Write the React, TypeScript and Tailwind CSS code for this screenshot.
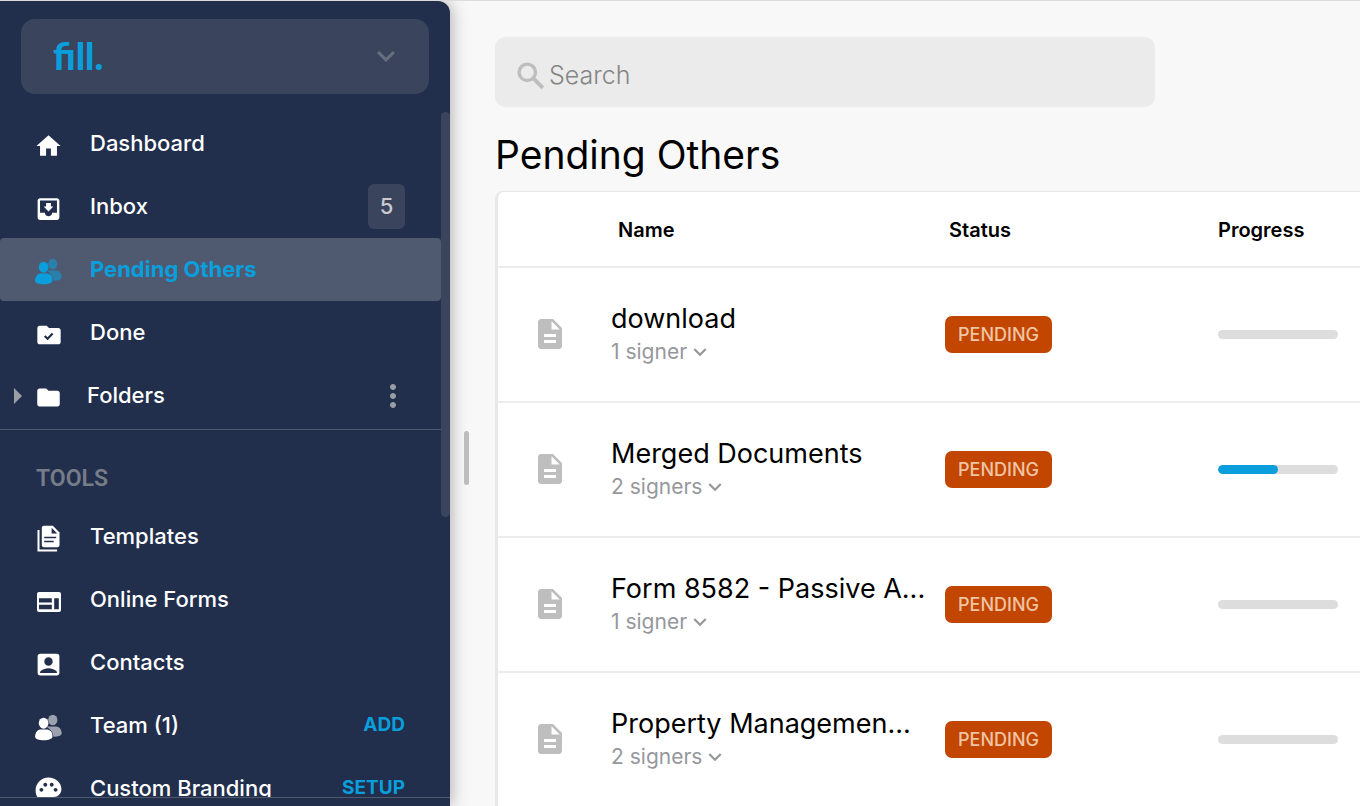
import type { ReactNode } from "react";
import {
  MdAccountBox,
  MdDescription,
  MdExpandMore,
  MdFolder,
  MdHome,
  MdMoreVert,
  MdMoveToInbox,
} from "react-icons/md";

function PeopleIcon() {
  return (
    <svg width="27" height="27" viewBox="0 0 27 27" fill="currentColor" aria-hidden="true">
      <g opacity="0.55">
        <ellipse cx="17.8" cy="6" rx="4.6" ry="5.2" />
        <path d="M11.5 12.6H21c3.4 0 5.7 3.2 5.7 6.6 0 2.4-3.6 3.6-8.2 3.6-.6-4.6-3-7.4-7-10.2Z" />
      </g>
      <ellipse cx="8.6" cy="9.2" rx="4.8" ry="5.5" />
      <path d="M.1 22.8c0-4.6 2.6-7.3 5.9-7.3h5.3c3.5 0 6.2 2.6 6.2 7.1 0 2.6-4.2 3.7-8.7 3.7S.1 25.2.1 22.8Z" />
    </svg>
  );
}

function FolderCheckIcon() {
  return (
    <svg width="28" height="28" viewBox="0 0 24 24" aria-hidden="true">
      <path
        fill="currentColor"
        d="M10 4H4c-1.1 0-1.99.9-1.99 2L2 18c0 1.1.9 2 2 2h16c1.1 0 2-.9 2-2V8c0-1.1-.9-2-2-2h-8l-2-2z"
      />
      <path d="M8.3 12.8l2.500 2.400 4.300-4.400" fill="none" stroke="#212e4c" strokeWidth="1.9" />
    </svg>
  );
}

function TemplatesIcon() {
  return (
    <svg width="25" height="27" viewBox="0 0 25 27" aria-hidden="true">
      <path
        fill="currentColor"
        d="M8 .8h8.900l6.600 6.600V20c0 1.300-.8 2.200-2.200 2.200H8c-1.400 0-2.200-.9-2.200-2.200V3C5.800 1.700 6.600.8 8 .8Z"
      />
      <path d="M15.600 2.800v5.800h5.600Z" fill="#212e4c" />
      <path d="M8.200 12.500h12M8.200 16.500h9.500" stroke="#212e4c" strokeWidth="1.300" />
      <path d="M2.500 5v20.400h18.600" fill="none" stroke="currentColor" strokeWidth="2" />
    </svg>
  );
}

function FormIcon() {
  return (
    <svg width="24" height="20" viewBox="0 0 24 20" aria-hidden="true">
      <rect width="24" height="20" rx="2" fill="currentColor" />
      <path d="M2 6.200h12.800v4.200H2zM2 12.800h12.800v4.400H2zM17.200 6.200h4.600v11h-4.600z" fill="#212e4c" />
    </svg>
  );
}

function PaletteIcon() {
  return (
    <svg width="31" height="31" viewBox="0 0 24 24" fill="currentColor" className="shrink-0" aria-hidden="true">
      <path d="M12 2C6.490 2 2 6.490 2 12s4.490 10 10 10a2.500 2.500 0 0 0 2.500-2.500c0-.61-.23-1.200-.64-1.670a.528.528 0 0 1-.13-.33c0-.28.22-.5.5-.5H16c3.310 0 6-2.690 6-6 0-4.960-4.490-9-10-9zm5.500 11c-.83 0-1.500-.67-1.500-1.500s.67-1.500 1.500-1.500 1.500.67 1.500 1.500-.67 1.500-1.500 1.500zm-3-4c-.83 0-1.500-.67-1.500-1.500S13.670 6 14.500 6s1.500.67 1.500 1.500S15.330 9 14.500 9zM5 11.500c0-.83.67-1.500 1.500-1.500s1.500.67 1.500 1.500S7.330 13 6.500 13 5 12.330 5 11.500zm6-4c0 .83-.67 1.500-1.500 1.500S8 8.330 8 7.500 8.670 6 9.500 6s1.500.67 1.500 1.500z" />
    </svg>
  );
}

function SearchIcon() {
  return (
    <svg width="36" height="36" viewBox="0 0 36 36" fill="none" stroke="#bebebe" strokeWidth="3.4" aria-hidden="true">
      <circle cx="14.300" cy="14.300" r="8.200" />
      <path d="M20.200 20.200l9.600 9.600" strokeWidth="4" />
    </svg>
  );
}

type NavRowProps = {
  icon: ReactNode;
  label: string;
  active?: boolean;
  trailing?: ReactNode;
};

function NavRow({ icon, label, active, trailing }: NavRowProps) {
  return (
    <li
      className={
        active
          ? "flex h-[63px] items-center rounded bg-[#4f5a71] pr-9 pl-[34px] font-bold text-[#0a9fdc]"
          : "flex h-[63px] items-center pr-9 pl-[34px] font-medium text-white"
      }
    >
      <a href="#" className="flex flex-1 items-center gap-[27px]" aria-current={active ? "page" : undefined}>
        <span className="mt-1 flex w-[29px] justify-center">{icon}</span>
        <span className="whitespace-nowrap">{label}</span>
      </a>
      {trailing}
    </li>
  );
}

function NavAction({ children }: { children: ReactNode }) {
  return (
    <button type="button" className="text-[19px] font-bold text-[#0a9fdc]">
      {children}
    </button>
  );
}

function Sidebar() {
  return (
    <aside className="z-10 flex w-[450px] shrink-0 flex-col rounded-tr-xl bg-[#212e4c] shadow-[0_0_18px_rgba(0,0,0,0.35)]">
      <div className="px-[21px] pt-[18px] pb-[18px]">
        <button
          type="button"
          aria-label="fill. account menu"
          className="flex h-[75px] w-full items-center justify-between rounded-[14px] bg-[#3a455d] pr-[25px] pb-0.5 pl-8 font-['Lato',sans-serif] text-[37px] font-black text-[#0a9fdc]"
        >
          <span>fill.</span>
          <MdExpandMore size={36} className="text-[#686f80]" />
        </button>
      </div>

      <div className="flex min-h-0 flex-1">
        <nav className="min-w-0 flex-1 overflow-hidden text-[22px]" aria-label="Main">
          <ul className="border-b border-[#4f5a71] pb-0.5">
            <NavRow icon={<MdHome size={30} />} label="Dashboard" />
            <NavRow
              icon={<MdMoveToInbox size={30} />}
              label="Inbox"
              trailing={
                <span className="flex h-[45px] w-[37px] items-center justify-center rounded-md bg-[#3a455d] text-[#c9cbd0]">
                  5
                </span>
              }
            />
            <NavRow icon={<PeopleIcon />} label="Pending Others" active />
            <NavRow icon={<FolderCheckIcon />} label="Done" />
            <li className="flex h-[63px] items-center pr-[30px] pl-3.5 font-medium text-white">
              <button type="button" aria-label="Expand folders" className="w-5 text-[#9c9ea5]">
                <svg width="8" height="16" viewBox="0 0 8 16" fill="currentColor" aria-hidden="true">
                  <path d="M0 0l8 8-8 8Z" />
                </svg>
              </button>
              <a href="#" className="flex flex-1 items-center gap-6">
                <span className="mt-1 flex w-[29px] justify-center">
                  <MdFolder size={27} />
                </span>
                <span>Folders</span>
              </a>
              <button type="button" aria-label="Folder options" className="text-[#9c9ea5]">
                <MdMoreVert size={36} />
              </button>
            </li>
          </ul>

          <h2 className="flex h-[75px] items-center pt-6 pl-9 font-['Roboto',sans-serif] text-[23px] font-semibold text-[#777c89]">
            TOOLS
          </h2>
          <ul>
            <NavRow icon={<TemplatesIcon />} label="Templates" />
            <NavRow icon={<FormIcon />} label="Online Forms" />
            <NavRow icon={<MdAccountBox size={29} />} label="Contacts" />
            <NavRow icon={<PeopleIcon />} label="Team (1)" trailing={<NavAction>ADD</NavAction>} />
            <NavRow icon={<PaletteIcon />} label="Custom Branding" trailing={<NavAction>SETUP</NavAction>} />
          </ul>
        </nav>
        <div className="w-[9px] shrink-0">
          <div className="h-[405px] rounded-full bg-[#3a455d]" />
        </div>
      </div>
      <div className="h-[9px] shrink-0 border-t border-[#4f5a71]" />
    </aside>
  );
}

const documents = [
  { name: "download", signers: "1 signer", progress: 0 },
  { name: "Merged Documents", signers: "2 signers", progress: 50 },
  { name: "Form 8582 - Passive A...", signers: "1 signer", progress: 0 },
  { name: "Property Managemen...", signers: "2 signers", progress: 0 },
];

function DocumentTable() {
  return (
    <div className="flex-1 rounded-tl-lg border-t border-l-[3px] border-[#e8e8e8] bg-white">
      <table className="w-full table-fixed text-left">
        <colgroup>
          <col className="w-[113px]" />
          <col className="w-[334px]" />
          <col className="w-[273px]" />
          <col />
        </colgroup>
        <thead>
          <tr className="h-[75px] border-b-2 border-[#ececec] text-xl">
            <th aria-label="Type" />
            <th className="pt-0.5 pl-[7px] font-semibold">Name</th>
            <th className="pt-0.5 pl-1 font-semibold">Status</th>
            <th className="pt-0.5 font-semibold">Progress</th>
          </tr>
        </thead>
        <tbody>
          {documents.map((doc) => (
            <tr key={doc.name} className="h-[135px] border-b-2 border-[#ececec]">
              <td className="pb-0.5 pl-[34px]">
                <MdDescription size={36} className="text-[#bebebe]" />
              </td>
              <td className="pb-0.5">
                <div className="text-[27px] leading-9 whitespace-nowrap">{doc.name}</div>
                <button type="button" className="flex items-center text-[21px] leading-[30px] text-[#96979c]">
                  {doc.signers}
                  <MdExpandMore size={26} />
                </button>
              </td>
              <td>
                <span className="flex h-[37px] w-[107px] items-center justify-center rounded-[7px] bg-[#c24600] text-lg font-medium text-[#f0c4a4]">
                  PENDING
                </span>
              </td>
              <td>
                <div
                  role="progressbar"
                  aria-label={doc.name}
                  aria-valuenow={doc.progress}
                  className="h-[9px] w-[120px] overflow-hidden rounded-full bg-[#dddddd]"
                >
                  <div className="h-full rounded-full bg-[#0a9fdc]" style={{ width: `${doc.progress}%` }} />
                </div>
              </td>
            </tr>
          ))}
        </tbody>
      </table>
    </div>
  );
}

export default function App() {
  return (
    <div className="flex h-screen overflow-hidden border-t border-[#dcdcdc] bg-[#f8f8f8] font-['Inter',sans-serif] text-black">
      <Sidebar />
      <div className="z-20 w-[45px] shrink-0 pt-[430px] pl-3.5">
        <div className="h-[54px] w-[5px] rounded-full bg-[#bdbdbd]" />
      </div>
      <main className="flex min-w-0 flex-1 flex-col pt-9">
        <label className="flex h-[70px] w-full max-w-[660px] shrink-0 items-center rounded-[10px] bg-[#ebebeb] pt-2 pl-[18px]">
          <SearchIcon />
          <input
            type="search"
            aria-label="Search"
            placeholder="Search"
            className="min-w-0 flex-1 bg-transparent text-[25px] font-light outline-none placeholder:text-[#858585]"
          />
        </label>
        <h1 className="flex h-[84px] shrink-0 items-center pt-2.5 text-[39px] leading-none">Pending Others</h1>
        <DocumentTable />
      </main>
    </div>
  );
}
